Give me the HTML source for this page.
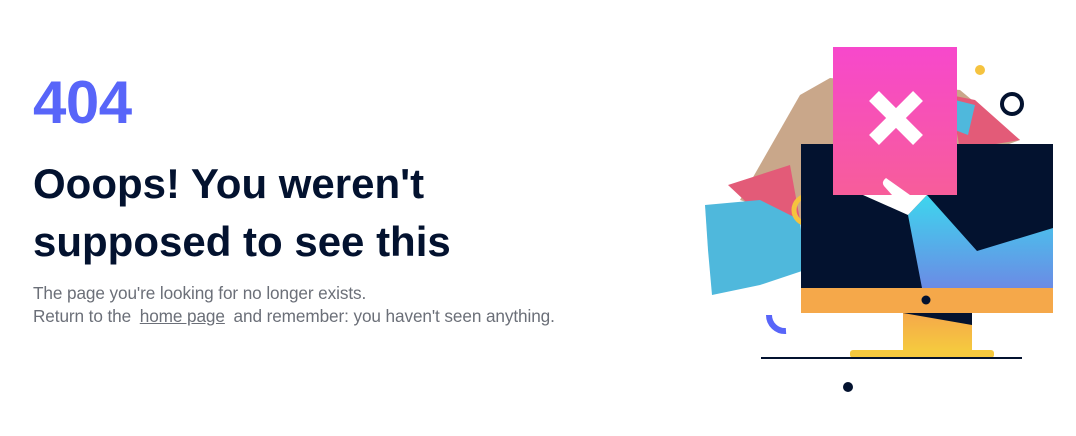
<!DOCTYPE html>
<html><head><meta charset="utf-8"><style>
body{margin:0;width:1076px;height:436px;background:#fff;overflow:hidden;position:relative;font-family:"Liberation Sans",sans-serif}
.n{position:absolute;left:33px;top:68px;font-size:60px;font-weight:bold;color:#5865f9;letter-spacing:-0.5px}
h1{position:absolute;left:33px;top:155px;margin:0;font-size:42px;line-height:58px;font-weight:bold;color:#03122f;letter-spacing:0}
p{position:absolute;left:33px;top:282px;margin:0;font-size:17.2px;line-height:23px;color:#6b6f78;letter-spacing:-0.1px}
p a{color:#6b6f78;text-decoration:underline;margin:0 4px}
svg{position:absolute;left:0;top:0}
</style></head><body>
<div class="n">404</div>
<h1>Ooops! You weren't<br>supposed to see this</h1>
<p>The page you're looking for no longer exists.<br>Return to the <a>home page</a> and remember: you haven't seen anything.</p>
<svg width="1076" height="436">
<defs>
<linearGradient id="pk" x1="0" y1="0" x2="0" y2="1"><stop offset="0" stop-color="#f748cc"/><stop offset="1" stop-color="#f75d9a"/></linearGradient>
<linearGradient id="bl" x1="0" y1="0" x2="0" y2="1"><stop offset="0" stop-color="#3dd6ee"/><stop offset="1" stop-color="#6b8be5"/></linearGradient>
<linearGradient id="yl" x1="0" y1="0" x2="0" y2="1"><stop offset="0" stop-color="#f5a84a"/><stop offset="1" stop-color="#f5c93f"/></linearGradient>
</defs>
<path d="M800 95 L830 78 L960 90 L1020 140 L800 220 L740 200 Z" fill="#c9a78a"/>
<path d="M950 95 L975 100 L1020 140 L960 150 Z" fill="#e35b78"/>
<path d="M728 185 L790 165 L800 220 L760 215 Z" fill="#e35b78"/>
<path d="M705 205 L760 200 L800 220 L805 270 L760 285 L712 295 L708 250 Z" fill="#4fb8dc"/>
<path d="M955 100 L975 105 L968 135 L955 130 Z" fill="#4fb8dc"/>
<circle cx="980" cy="70" r="5" fill="#f5c33f"/>
<circle cx="1012" cy="104" r="10" fill="none" stroke="#03122f" stroke-width="4"/>
<circle cx="808" cy="210" r="14" fill="none" stroke="#f5c33f" stroke-width="5"/>
<path d="M769 315 A16 16 0 0 0 786 331" fill="none" stroke="#5865f9" stroke-width="6"/>
<circle cx="848" cy="387" r="5" fill="#03122f"/>
<rect x="801" y="144" width="252" height="144" fill="#03122f"/>
<path d="M908 215 L927 195 L977 251 L1053 228 L1053 288 L922 288 Z" fill="url(#bl)"/>
<path d="M863 195 L908 215 L927 195 Z" fill="#fff"/>
<rect x="801" y="288" width="252" height="25" fill="#f5a84a"/>
<circle cx="926" cy="300" r="4.5" fill="#03122f"/>
<path d="M903 313 L972 313 L972 350 L903 350 Z" fill="url(#yl)"/>
<path d="M903 313 L972 313 L972 325 Z" fill="#03122f"/>
<rect x="850" y="350" width="144" height="8" rx="3" fill="#f5c93f"/>
<rect x="761" y="357" width="261" height="2" fill="#03122f"/>
<rect x="833" y="47" width="124" height="148" fill="url(#pk)"/>
<path d="M874 96 L918 140 M918 96 L874 140" stroke="#fff" stroke-width="14"/>
<path d="M886 178 Q881 182 884 186 L892 195 L910 195 Z" fill="#fff"/>
</svg>
</body></html>
